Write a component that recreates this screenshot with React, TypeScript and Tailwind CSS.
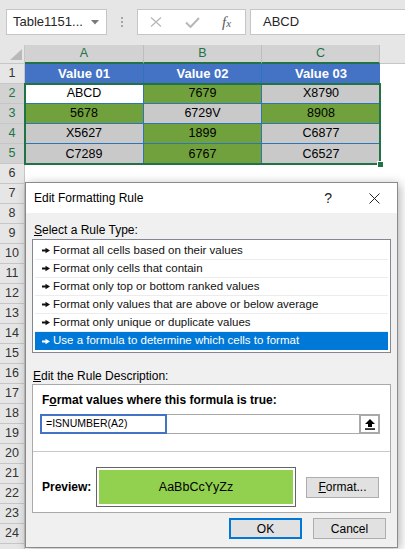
import React from 'react';

type Cell = { t: string; bg: string };

const colW = ['w-[119px]', 'w-[118px]', 'w-[118px]'];

const dataRows: Cell[][] = [
  [
    { t: 'ABCD', bg: 'bg-white' },
    { t: '7679', bg: 'bg-[#70a13c]' },
    { t: 'X8790', bg: 'bg-[#c9c9c9]' },
  ],
  [
    { t: '5678', bg: 'bg-[#70a13c]' },
    { t: '6729V', bg: 'bg-[#c9c9c9]' },
    { t: '8908', bg: 'bg-[#70a13c]' },
  ],
  [
    { t: 'X5627', bg: 'bg-[#c9c9c9]' },
    { t: '1899', bg: 'bg-[#70a13c]' },
    { t: 'C6877', bg: 'bg-[#c9c9c9]' },
  ],
  [
    { t: 'C7289', bg: 'bg-[#c9c9c9]' },
    { t: '6767', bg: 'bg-[#70a13c]' },
    { t: 'C6527', bg: 'bg-[#c9c9c9]' },
  ],
];

const ruleTypes = [
  'Format all cells based on their values',
  'Format only cells that contain',
  'Format only top or bottom ranked values',
  'Format only values that are above or below average',
  'Format only unique or duplicate values',
  'Use a formula to determine which cells to format',
];

// rows 6..24 get numbers, the last one is cut by the window so it stays blank
const emptyRows = Array.from({ length: 20 }, (_, i) => i + 6);

const RowHeader = ({ n, selected }: { n: number | null; selected?: boolean }) => (
  <div
    className={`w-[25px] h-[20px] shrink-0 flex items-center justify-center border-r border-b border-[#c6c6c6] text-[12.5px] ${
      selected ? 'bg-[#d2d2d2] text-[#217346]' : 'bg-[#e6e6e6] text-[#333333]'
    }`}
  >
    {n}
  </div>
);

// little arrow in front of each rule type
const RuleArrow = () => (
  <svg width="8" height="7" viewBox="0 0 8 7" className="shrink-0">
    <path d="M0 2.6h4v1.8H0z M3.5 0.8 L8 3.5 L3.5 6.2z" fill="currentColor" />
  </svg>
);

const App: React.FC = () => {
  return (
    <div className="relative w-[405px] h-[549px] overflow-hidden bg-white font-['Liberation_Sans',Arial,sans-serif] text-black">
      {/* formula bar */}
      <div className="h-[45px] bg-[#e6e6e6] flex items-start pt-[9px] pl-[6px]">
        <div className="w-[101px] h-[26px] shrink-0 bg-white border border-[#c6c6c6] flex items-center pl-[6px] pr-[7px] text-[13px] text-[#262626]">
          <span className="flex-1">Table1151...</span>
          <svg width="8" height="5" viewBox="0 0 8 5">
            <path d="M0 0h8L4 4.5z" fill="#7a7a7a" />
          </svg>
        </div>
        <div className="w-[30px] h-[26px] shrink-0 flex flex-col items-center justify-center gap-[2px]">
          <div className="w-[2px] h-[2px] bg-[#a6a6a6]" />
          <div className="w-[2px] h-[2px] bg-[#a6a6a6]" />
          <div className="w-[2px] h-[2px] bg-[#a6a6a6]" />
        </div>
        <div className="w-[109px] h-[26px] shrink-0 bg-white border border-[#c6c6c6] flex items-center">
          <svg width="12" height="10" viewBox="0 0 12 10" className="ml-[12px]">
            <path d="M1 0.5 L11 9.5 M11 0.5 L1 9.5" stroke="#b8b8b8" strokeWidth="1.3" fill="none" />
          </svg>
          <svg width="15" height="11" viewBox="0 0 15 11" className="ml-[23px]">
            <path d="M1 5.5 L5.5 10 L14 1" stroke="#b8b8b8" strokeWidth="2" fill="none" />
          </svg>
          <span className="ml-[22px] italic font-['Liberation_Serif',serif] text-[15px] text-[#5a5a5a] leading-none">
            f<span className="text-[11px]">x</span>
          </span>
        </div>
        <div className="ml-[4px] flex-1 -mr-[2px] h-[26px] bg-white border border-[#c6c6c6] flex items-center pl-[12px] text-[13px] text-[#262626]">
          ABCD
        </div>
      </div>

      {/* column headers */}
      <div className="flex h-[19px]">
        <div className="w-[25px] shrink-0 bg-[#e6e6e6] border-r border-b border-[#c6c6c6] flex items-end justify-end pr-[2px] pb-[3px]">
          <svg width="12" height="11" viewBox="0 0 12 11">
            <path d="M12 0 V11 H0z" fill="#b9b9b9" />
          </svg>
        </div>
        {['A', 'B', 'C'].map((l, i) => (
          <div
            key={l}
            className={`${colW[i]} shrink-0 bg-[#d2d2d2] border-r border-[#bdbdbd] border-b-2 border-b-[#217346] flex items-center justify-center text-[12.5px] text-[#217346]`}
          >
            {l}
          </div>
        ))}
        <div className="flex-1 bg-[#e6e6e6] border-b border-[#c6c6c6]" />
      </div>

      {/* row 1: table header */}
      <div className="flex h-[20px]">
        <RowHeader n={1} />
        {['Value 01', 'Value 02', 'Value 03'].map((v, i) => (
          <div
            key={v}
            className={`${colW[i]} shrink-0 bg-[#4472c4] text-white font-bold text-[13px] flex items-center justify-center ${
              i < 2 ? 'border-r border-[#2e75b6]' : ''
            }`}
          >
            {v}
          </div>
        ))}
      </div>

      {/* rows 2-5 */}
      {dataRows.map((row, r) => (
        <div key={r} className="flex h-[20px]">
          <RowHeader n={r + 2} selected />
          {row.map((c, i) => (
            <div
              key={i}
              className={`${colW[i]} shrink-0 ${c.bg} flex items-center justify-center text-[12.5px] border-[#2e75b6] ${
                i < 2 ? 'border-r' : ''
              } ${r < 3 ? 'border-b' : ''}`}
            >
              {c.t}
            </div>
          ))}
        </div>
      ))}

      {/* empty rows */}
      {emptyRows.map((n) => (
        <div key={n} className="flex h-[20px]">
          <RowHeader n={n < 25 ? n : null} />
          <div className="flex-1 bg-white" />
        </div>
      ))}

      {/* selection A2:C5 */}
      <div className="absolute left-[24px] top-[83px] w-[357px] h-[82px] border-2 border-[#217346] pointer-events-none" />
      <div className="absolute left-[377px] top-[161px] w-[7px] h-[7px] bg-[#217346] border border-white" />

      {/* dialog */}
      <div className="absolute left-[25px] top-[182px] w-[373px] h-[366px] border border-[#8a8a8a] bg-[#f0f0f0] shadow-[2px_2px_10px_rgba(0,0,0,0.3)] flex flex-col text-[12px] text-black">
        <div className="h-[30px] shrink-0 bg-white flex items-center pl-[8px]">
          <span className="flex-1">Edit Formatting Rule</span>
          <span className="text-[14px] text-[#222222]">?</span>
          <svg width="11" height="11" viewBox="0 0 11 11" className="ml-[37px] mr-[17px]">
            <path d="M0.5 0.5 L10.5 10.5 M10.5 0.5 L0.5 10.5" stroke="#222222" strokeWidth="1" fill="none" />
          </svg>
        </div>

        <div className="flex flex-col px-[6px] pt-[9px]">
          <div className="pl-[2px] leading-[16px]">
            <span className="underline">S</span>elect a Rule Type:
          </div>
          <div className="mt-[1px] border border-[#828790] bg-white p-[2px] text-[11.5px]">
            {ruleTypes.map((t, i) => {
              const sel = i === ruleTypes.length - 1;
              return (
                <div
                  key={t}
                  className={`h-[18px] flex items-center gap-[3px] pl-[7px] ${
                    sel ? 'bg-[#0078d7] text-white' : 'border-b border-[#ececec] text-[#111111]'
                  }`}
                >
                  <RuleArrow />
                  <span>{t}</span>
                </div>
              );
            })}
          </div>

          <div className="mt-[15px] pl-[1px] leading-[16px]">
            <span className="underline">E</span>dit the Rule Description:
          </div>
          <div className="h-[129px] border border-[#a9a9a9] bg-white flex flex-col">
            <div className="pt-[7px] pl-[9px] leading-[16px] font-bold">
              F<span className="underline">o</span>rmat values where this formula is true:
            </div>
            <div className="mt-[6px] ml-[7px] w-[340px] h-[20px] flex">
              <div className="w-[127px] border-2 border-[#4472c4] flex items-center pl-[4px] text-[10.5px]">
                =ISNUMBER(A2)
              </div>
              <div className="flex-1 border-y border-[#a9a9a9]" />
              <div className="w-[21px] border-2 border-[#a9a9a9] bg-white flex items-center justify-center">
                <svg width="10" height="11" viewBox="0 0 10 11">
                  <path d="M5 0 L10 5 H7 V8 H3 V5 H0z" fill="#000000" />
                  <path d="M0 9.3h10v1.5H0z" fill="#000000" />
                </svg>
              </div>
            </div>
            <div className="mt-[17px] h-px bg-[#c8c8c8]" />
            <div className="mt-[15px] flex items-center pl-[9px]">
              <span className="w-[54px] font-bold">Preview:</span>
              <div className="w-[200px] h-[40px] border border-[#646464] p-[2px]">
                <div className="h-full bg-[#92d050] flex items-center justify-center text-[12.5px]">
                  AaBbCcYyZz
                </div>
              </div>
              <button className="ml-[10px] w-[73px] h-[21px] bg-[#e1e1e1] border border-[#adadad] flex items-center justify-center text-[12px]">
                <span className="underline">F</span>ormat...
              </button>
            </div>
          </div>

          <div className="mt-[5px] flex justify-end gap-[11px] pr-[5px]">
            <button className="w-[73px] h-[21px] bg-[#e1e1e1] border-2 border-[#0078d7] flex items-center justify-center text-[12px]">
              OK
            </button>
            <button className="w-[73px] h-[21px] bg-[#e1e1e1] border border-[#adadad] flex items-center justify-center text-[12px]">
              Cancel
            </button>
          </div>
        </div>
      </div>
    </div>
  );
};

export default App;
